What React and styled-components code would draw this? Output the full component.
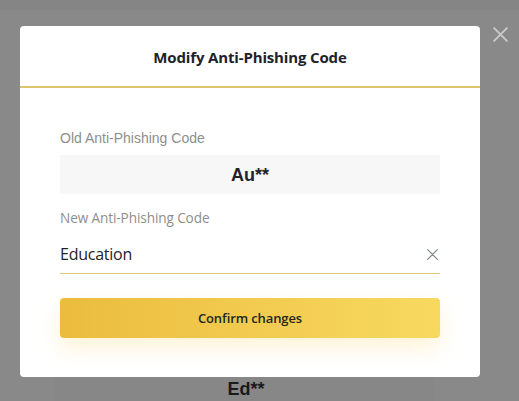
import React from 'react';
import styled, { createGlobalStyle } from 'styled-components';

const GlobalStyle = createGlobalStyle`
  html, body {
    margin: 0;
    padding: 0;
  }
  body {
    font-family: "Liberation Sans", Arial, sans-serif;
    background: #898989;
  }
`;

const Page = styled.div`
  position: relative;
  width: 519px;
  height: 401px;
  overflow: hidden;
  background: #898989;
  box-shadow: inset 0 10px 0 #858585;
`;

const BehindCard = styled.div`
  margin: 376px 84px 0 55px;
  height: 60px;
  display: flex;
  justify-content: center;
  box-sizing: border-box;
  background: #878787;
`;

const BehindCode = styled.div`
  font-family: "Liberation Sans", Arial, sans-serif;
  font-weight: 700;
  font-size: 18px;
  line-height: 26px;
  color: #1a1a1a;
  margin-left: 2px;
`;

// Overlay layer
const Backdrop = styled.div`
  position: absolute;
  inset: 0;
  padding: 26px 0 0 20px;
`;

const CloseOuter = styled.button`
  position: absolute;
  top: 25px;
  right: 10px;
  width: 18px;
  height: 18px;
  padding: 0;
  border: none;
  background: transparent;
  color: #c9c9c9;
  display: flex;
  align-items: center;
  justify-content: center;
`;

const Modal = styled.div`
  width: 460px;
  height: 351px;
  background: #ffffff;
  border-radius: 4px;
  display: flex;
  flex-direction: column;
  overflow: hidden;
`;

const Header = styled.div`
  height: 62px;
  display: flex;
  align-items: center;
  justify-content: center;
  border-bottom: 2px solid #e0c36f;
  padding-top: 1px;
  box-sizing: border-box;
`;

const Title = styled.h2`
  margin: 0;
  font-family: "Open Sans", "Noto Sans", sans-serif;
  font-weight: 700;
  font-size: 15px;
  letter-spacing: -0.15px;
  color: #1e2329;
`;

const Body = styled.div`
  padding: 41px 40px 0;
  display: flex;
  flex-direction: column;
`;

const Label = styled.label`
  font-family: ${p => (p.plex ? '"Open Sans", "Noto Sans", sans-serif' : '"Liberation Sans", Arial, sans-serif')};
  font-size: ${p => (p.plex ? '13.6px' : '14px')};
  line-height: 18px;
  color: #8e8e8e;
  letter-spacing: ${p => (p.plex ? '-0.1px' : '0')};
`;

const ReadOnlyBox = styled.div`
  margin-top: 8px;
  height: 39px;
  background: #f7f7f7;
  border-radius: 2px;
  display: flex;
  align-items: center;
  justify-content: center;
  padding-top: 2px;
  box-sizing: border-box;
  font-family: "Liberation Sans", Arial, sans-serif;
  font-weight: 700;
  font-size: 18px;
  color: #1e2329;
`;

const FieldGap = styled.div`
  height: 15px;
`;

const InputRow = styled.div`
  margin-top: 8px;
  height: 38px;
  display: flex;
  align-items: center;
  border-bottom: 1px solid #dfc67a;
`;

const TextInput = styled.input`
  flex: 1;
  border: none;
  outline: none;
  padding: 0;
  background: transparent;
  font-family: "Open Sans", "Noto Sans", sans-serif;
  font-weight: 500;
  font-size: 16px;
  letter-spacing: -0.25px;
  color: #1e2329;
`;

const ClearButton = styled.button`
  width: 14px;
  height: 14px;
  padding: 0;
  margin-right: 1px;
  border: none;
  background: transparent;
  color: #878c93;
  display: flex;
  align-items: center;
  justify-content: center;
`;

const ConfirmButton = styled.button`
  margin-top: 24px;
  height: 40px;
  border: none;
  border-radius: 4px;
  background: linear-gradient(90deg, #ebbc3e 0%, #f8d960 100%);
  box-shadow: 0 10px 22px rgba(246, 200, 70, 0.22);
  font-family: "Open Sans", "Noto Sans", sans-serif;
  font-weight: 600;
  font-size: 13px;
  letter-spacing: -0.1px;
  color: #26251f;
`;

const Cross = ({ size, stroke }) => (
  <svg width={size} height={size} viewBox="0 0 16 16" fill="none">
    <path d="M2 2L14 14M14 2L2 14" stroke="currentColor" strokeWidth={stroke} strokeLinecap="round" />
  </svg>
);

export default function App() {
  const [code, setCode] = React.useState('Education');

  return (
    <Page>
      <GlobalStyle />
      <BehindCard>
        <BehindCode>Ed**</BehindCode>
      </BehindCard>
      <Backdrop>
        <Modal>
          <Header>
            <Title>Modify Anti-Phishing Code</Title>
          </Header>
          <Body>
            <Label>Old Anti-Phishing Code</Label>
            <ReadOnlyBox>Au**</ReadOnlyBox>
            <FieldGap />
            <Label plex>New Anti-Phishing Code</Label>
            <InputRow>
              <TextInput value={code} onChange={e => setCode(e.target.value)} />
              <ClearButton onClick={() => setCode('')}>
                <Cross size={13} stroke={1.6} />
              </ClearButton>
            </InputRow>
            <ConfirmButton>Confirm changes</ConfirmButton>
          </Body>
        </Modal>
        <CloseOuter>
          <Cross size={17} stroke={1.8} />
        </CloseOuter>
      </Backdrop>
    </Page>
  );
}
